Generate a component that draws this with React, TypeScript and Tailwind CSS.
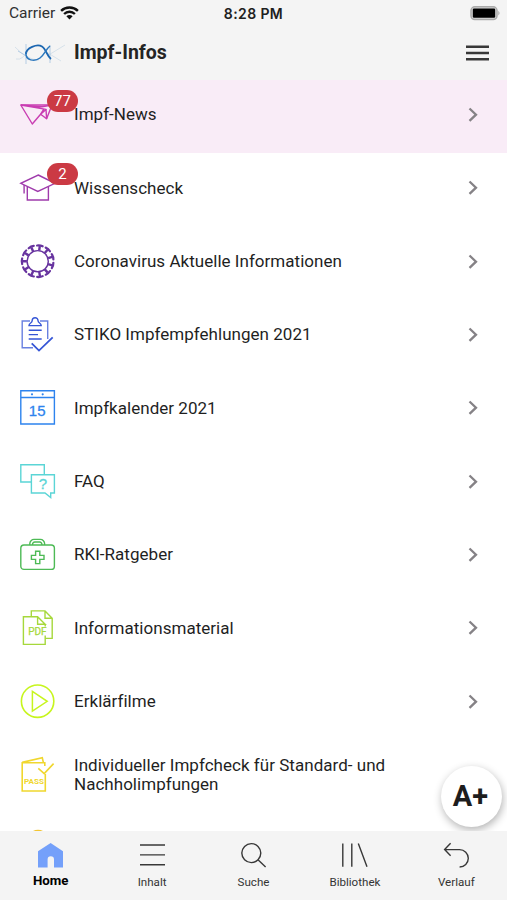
import React from "react";
import clsx from "clsx";

const stroke = {
  fill: "none",
  stroke: "currentColor",
  strokeWidth: 1.4,
};

const PlaneIcon = () => (
  <g {...stroke} strokeLinejoin="round">
    <path d="M.8 8H32L26.6 21.8 20.6 17.2 12.3 27Z" />
    <path d="M.8 8 26 12.4 20.6 17.2M.8 8 22 9.8 32 8M26 12.4 26.6 21.8M20.6 17.2 24 11.8" />
  </g>
);

const HatIcon = () => (
  <g {...stroke}>
    <path d="M18.2 5 35 13.3 17.8 21.4.8 13.3Z" />
    <path d="M7.3 16.8V30H28.4V16.8M4.1 15V23.5" />
  </g>
);

const VirusIcon = () => (
  <g {...stroke}>
    <circle cx="17.7" cy="17.2" r="10.6" strokeWidth={1.4} />
    {Array.from({ length: 11 }, (_, i) => (
      <g key={i} transform={`rotate(${i * 32.73 + 8} 17.7 17.2)`}>
        <path d="M17.7 6.4V2" strokeWidth={2.4} />
        <path d="M14.9 1.7Q17.7.8 20.5 1.7" strokeWidth={2.2} strokeLinecap="round" />
      </g>
    ))}
  </g>
);

const ClipboardIcon = () => (
  <g {...stroke}>
    <path d="M10 4H2.2V30.7H13M20 4H27.7V22" opacity=".75" />
    <path d="M9 8.6H21.2C21.2 5.5 18 6.5 18 3.6A2.9 2.9 0 0 0 12.2 3.6C12.2 6.5 9 5.5 9 8.6Z" />
    <path d="M8.7 13.2H21.7M8.7 17.6H18M8.7 22H21.7" />
    <path d="M11.7 26.3 19 33.6 32.7 20.3" strokeWidth={1.8} />
  </g>
);

const CalendarIcon = () => (
  <g>
    <path {...stroke} d="M.8.8H34.4V34H.8ZM.8 7.5H34.4" />
    <circle cx="12" cy="4.3" r="1.1" fill="currentColor" />
    <circle cx="22.7" cy="4.3" r="1.1" fill="currentColor" />
    <text x="17.2" y="26" textAnchor="middle" fontSize="15" fill="currentColor" stroke="currentColor" strokeWidth=".3" className="font-['Liberation_Sans',sans-serif]">
      15
    </text>
  </g>
);

const ChatIcon = () => (
  <g>
    <path {...stroke} d="M11 18H.8V.8H24.3V10.8M11.4 10.8H34.4V29H30.7V33.6L25 29H11.4Z" />
    <text x="22.9" y="25.2" textAnchor="middle" fontSize="15" fill="currentColor" stroke="currentColor" strokeWidth=".3" className="font-['Liberation_Sans',sans-serif]">
      ?
    </text>
  </g>
);

const MedkitIcon = () => (
  <g {...stroke}>
    <rect x=".8" y="8" width="33.6" height="24.4" rx="3.2" />
    <path d="M9.8 8V6.6A4.2 4.2 0 0 1 14 2.4H20.4A4.2 4.2 0 0 1 24.6 6.6V8M12.5 8V7.2A2.2 2.2 0 0 1 14.7 5H19.7A2.2 2.2 0 0 1 21.9 7.2V8" />
    <path d="M15.6 14.2H19.8V18.4H24V22.4H19.8V26.6H15.6V22.4H11.4V18.4H15.6Z" />
  </g>
);

const PdfIcon = () => (
  <g>
    <path {...stroke} d="M11.3 6.5V.9H25L32.2 8.3V28.4H25.4M25 .9V8.3H32.2" />
    <path {...stroke} d="M25.2 14.3V16.5M25.2 25.5V34.4H3.4V6.7H17.6L25.2 14.3H17.6V6.7" />
    <text x="8.2" y="24.7" fontSize="10.5" textLength="18.5" lengthAdjust="spacingAndGlyphs" fill="currentColor" stroke="currentColor" strokeWidth=".25" className="font-[Roboto,sans-serif]">
      PDF
    </text>
  </g>
);

const PlayIcon = () => (
  <g {...stroke} strokeWidth={1.6}>
    <circle cx="17.6" cy="17.2" r="16.2" />
    <path d="M12.4 7.4V27.2L27.2 17.3Z" strokeWidth={1.5} />
  </g>
);

const PassIcon = () => (
  <g>
    <path {...stroke} strokeWidth={1.6} d="M25.3 17V34H2.2V5.7H24.8V9M2.2 5.4 22.3.8 23.4 5.6" />
    <path {...stroke} strokeWidth={1.6} d="M18.3 11.3 24.2 16.6 33.6 6.6" />
    <text x="4" y="26.8" fontSize="7.8" fontWeight="700" textLength="20" lengthAdjust="spacingAndGlyphs" fill="currentColor" className="font-[Roboto,sans-serif]">
      PASS
    </text>
  </g>
);

const DiscIcon = () => <circle cx="18" cy="10.6" r="10.8" fill="currentColor" />;

type Entry = {
  label: string;
  icon: React.ComponentType;
  color: string;
  badge?: number;
  active?: boolean;
  noArrow?: boolean;
};

const entries: Entry[] = [
  { label: "Impf-News", icon: PlaneIcon, color: "text-[#c93db2]", badge: 77, active: true },
  { label: "Wissenscheck", icon: HatIcon, color: "text-[#9f3bac]", badge: 2 },
  { label: "Coronavirus Aktuelle Informationen", icon: VirusIcon, color: "text-[#67339f]" },
  { label: "STIKO Impfempfehlungen 2021", icon: ClipboardIcon, color: "text-[#3656d6]" },
  { label: "Impfkalender 2021", icon: CalendarIcon, color: "text-[#2d83ee]" },
  { label: "FAQ", icon: ChatIcon, color: "text-[#5bd5d6]" },
  { label: "RKI-Ratgeber", icon: MedkitIcon, color: "text-[#4dba55]" },
  { label: "Informationsmaterial", icon: PdfIcon, color: "text-[#a6d83b]" },
  { label: "Erklärfilme", icon: PlayIcon, color: "text-[#c7f51e]" },
  {
    label: "Individueller Impfcheck für Standard- und Nachholimpfungen",
    icon: PassIcon,
    color: "text-[#f0d72e]",
    noArrow: true,
  },
  { label: "", icon: DiscIcon, color: "text-[#f3c532]", noArrow: true },
];

function Row({ label, icon: Icon, color, badge, active, noArrow }: Entry) {
  return (
    <li
      className={clsx(
        "flex h-[73.35px] shrink-0 items-center pb-[2.5px] pl-5 pr-[29px]",
        active && "bg-[#f9ecf7]"
      )}
    >
      <div className="relative mr-[18px] shrink-0">
        <svg width="36" height="36" viewBox="0 0 36 36" className={clsx("block overflow-visible", color)}>
          <Icon />
        </svg>
        {badge && (
          <span className="absolute -top-[7px] left-[27px] flex h-[22px] w-[31px] items-center justify-center rounded-full bg-[#cb3a44] text-[15px] text-white">
            {badge}
          </span>
        )}
      </div>
      <span className="max-w-[340px] flex-1 text-[17px] leading-[19.5px] tracking-[0.03px] text-[#1f1f1f]">
        {label}
      </span>
      {!noArrow && (
        <svg width="10" height="16" viewBox="0 0 10 16" className="ml-auto text-[#858286]">
          <path d="M1.5 1.5 8 7.7 1.5 13.9" fill="none" stroke="currentColor" strokeWidth="2.3" />
        </svg>
      )}
    </li>
  );
}

const tabs = [
  {
    label: "Home",
    icon: <path d="M0 8.2 12.6 0 25 8.2V24.5H16V16.5A3.2 3.2 0 0 0 9.6 16.5V24.5H0Z" fill="#74a0fa" />,
    active: true,
  },
  { label: "Inhalt", icon: <path d="M0 2H25M0 11.9H25M0 21.8H25" /> },
  {
    label: "Suche",
    icon: (
      <>
        <circle cx="10.3" cy="10.1" r="9.5" />
        <path d="M17 16.8 24.6 24" />
      </>
    ),
  },
  { label: "Bibliothek", icon: <path d="M.8.6V23.8M9.8.6V23.8M16.3.6 25 23.8" /> },
  { label: "Verlauf", icon: <path d="M6.6.3.6 6.6 6.6 12.8M.6 6.6H15.6A8.7 8.7 0 0 1 15.6 24" /> },
];

function StatusBar() {
  return (
    <div className="relative flex h-[27px] items-center justify-between pl-[9px] pr-1.5">
      <div className="flex items-center gap-[5px] text-[15.5px] text-[#303030]">
        <span>Carrier</span>
        <svg width="19" height="14" viewBox="0 0 19 14" className="-mt-0.5">
          <path d="M1.1 4.9A12 12 0 0 1 17.9 4.9M4.1 8A7.7 7.7 0 0 1 14.9 8" fill="none" stroke="#111" strokeWidth="2.4" />
          <path d="M6.4 10.3A4.4 4.4 0 0 1 12.6 10.3L9.5 13.5Z" fill="#111" />
        </svg>
      </div>
      <span className="absolute inset-x-0 text-center font-[Inter,sans-serif] text-[14px] font-semibold tracking-[0.4px] text-[#202020]">
        8:28 PM
      </span>
      <svg width="31" height="15" viewBox="0 0 31 15" className="-mt-px">
        <rect x="1" y=".8" width="26" height="12.8" rx="3.8" fill="#d8d8d8" stroke="#aaa" strokeWidth="1.5" />
        <rect x="2.8" y="2.6" width="22.4" height="9.2" rx="1.2" fill="#000" />
        <path d="M28.3 4.8Q30.8 7.2 28.3 9.6Z" fill="#aaa" />
      </svg>
    </div>
  );
}

function Logo() {
  return (
    <svg width="54" height="26" viewBox="0 0 54 26" fill="none">
      <path d="M2 7Q14 20 26 20M3 19Q10 21 16 8M34 16 52 5M35 13 48 21" stroke="#d3dfe9" strokeWidth=".9" />
      <path d="M37 5V23M13 4V24M5 11 15 17" stroke="#a5c3df" strokeWidth=".8" />
      <path d="M13 14C13 8 24 3.5 29 6.5C33 9 34 16 38 19" stroke="#1b66b1" strokeWidth="1.8" />
      <path d="M13 12C12 21 22 22 27 18C32 14 33 9 37 6" stroke="#2d78bd" strokeWidth="1.5" />
    </svg>
  );
}

export default function App() {
  return (
    <div className="flex h-[900px] w-full max-w-[507px] flex-col overflow-hidden bg-white font-[Roboto,sans-serif]">
      <header className="h-[79.5px] shrink-0 bg-[#f4f4f4]">
        <StatusBar />
        <div className="flex h-[52px] items-center pl-[13px] pr-[18px]">
          <Logo />
          <h1 className="ml-[7px] text-[19.5px] font-bold text-[#242424]">Impf-Infos</h1>
          <svg width="23" height="16" viewBox="0 0 23 16" className="ml-auto">
            <path d="M0 1.8H23M0 8H23M0 14.2H23" stroke="#383838" strokeWidth="2.4" />
          </svg>
        </div>
      </header>

      <main className="relative min-h-0 flex-1 overflow-hidden">
        <ul className="flex flex-col">
          {entries.map((entry) => (
            <Row key={entry.label} {...entry} />
          ))}
        </ul>
        {/* Font size button */}
        <button className="absolute bottom-[4px] right-[5px] flex size-[61px] items-center justify-center rounded-full bg-white pt-0.5 pr-0.5 text-[29px] font-bold text-[#1d1d1d] shadow-[1px_3px_8px_rgba(0,0,0,0.3)]">
          A+
        </button>
      </main>

      <nav className="flex h-[69.5px] shrink-0 bg-[#f4f4f4] pt-3">
        {tabs.map((tab) => (
          <div key={tab.label} className="flex flex-1 flex-col items-center">
            <svg
              width="25"
              height="25"
              viewBox="0 0 25 25"
              fill="none"
              stroke={tab.active ? "none" : "#383838"}
              strokeWidth="1.4"
              className="overflow-visible"
            >
              {tab.icon}
            </svg>
            <span
              className={clsx(
                "leading-4",
                tab.active ? "mt-[5px] text-[13.3px] font-bold text-black" : "mt-1.5 text-[11.6px] text-[#333]"
              )}
            >
              {tab.label}
            </span>
          </div>
        ))}
      </nav>
    </div>
  );
}
